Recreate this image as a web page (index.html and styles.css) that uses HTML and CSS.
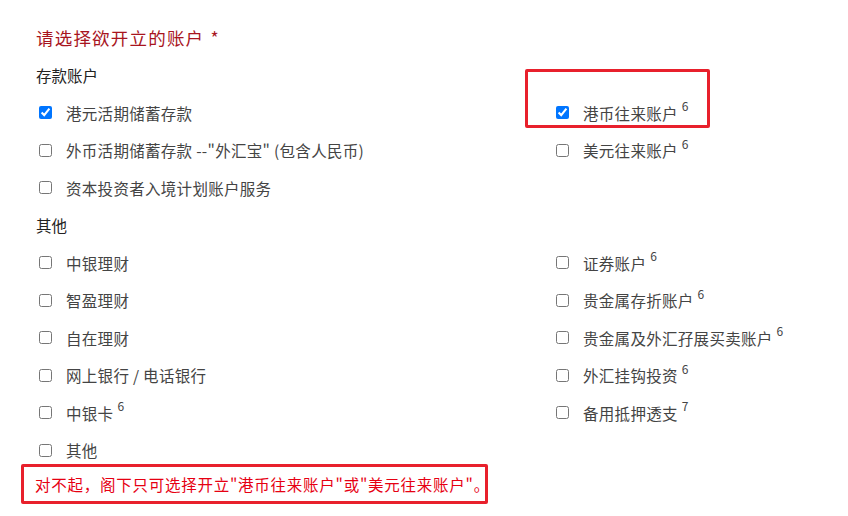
FILE: index.html
```html
<!DOCTYPE html>
<html lang="zh-CN">
<head>
<meta charset="utf-8">
<title>请选择欲开立的账户</title>
<link rel="stylesheet" href="styles.css">
</head>
<body>
<div class="form">
  <div class="title">请选择欲开立的账户 <span class="star">*</span></div>
  <div class="heading">存款账户</div>
  <div class="grid">
    <label class="item"><input type="checkbox" checked><span>港元活期储蓄存款</span></label>
    <label class="item"><input type="checkbox" checked><span>港币往来账户</span><sup>6</sup></label>
    <label class="item"><input type="checkbox"><span>外币活期储蓄存款 --"外汇宝" (包含人民币)</span></label>
    <label class="item"><input type="checkbox"><span>美元往来账户</span><sup>6</sup></label>
    <label class="item"><input type="checkbox"><span>资本投资者入境计划账户服务</span></label>
    <div class="item empty"></div>
  </div>
  <div class="heading">其他</div>
  <div class="grid">
    <label class="item"><input type="checkbox"><span>中银理财</span></label>
    <label class="item"><input type="checkbox"><span>证券账户</span><sup>6</sup></label>
    <label class="item"><input type="checkbox"><span>智盈理财</span></label>
    <label class="item"><input type="checkbox"><span>贵金属存折账户</span><sup>6</sup></label>
    <label class="item"><input type="checkbox"><span>自在理财</span></label>
    <label class="item"><input type="checkbox"><span>贵金属及外汇孖展买卖账户</span><sup>6</sup></label>
    <label class="item"><input type="checkbox"><span>网上银行 / 电话银行</span></label>
    <label class="item"><input type="checkbox"><span>外汇挂钩投资</span><sup>6</sup></label>
    <label class="item"><input type="checkbox"><span>中银卡</span><sup>6</sup></label>
    <label class="item"><input type="checkbox"><span>备用抵押透支</span><sup>7</sup></label>
    <label class="item"><input type="checkbox"><span>其他</span></label>
    <div class="item empty"></div>
  </div>
  <div class="error">对不起，阁下只可选择开立"港币往来账户"或"美元往来账户"。</div>
  <div class="highlight"></div>
</div>
</body>
</html>
```
FILE: styles.css
```css
html, body {
  margin: 0;
  padding: 0;
  background: #ffffff;
}
body {
  font-family: "Microsoft YaHei", "Noto Sans CJK SC", "Noto Sans", sans-serif;
  color: #333333;
}
.form {
  position: relative;
  padding: 19px 0 0 36px;
  width: 812px;
}
.title {
  height: 37.5px;
  line-height: 37.5px;
  font-size: 17.5px;
  color: #a8141e;
  letter-spacing: 1.2px;
}
.star {
  margin-left: 1px;
}
.heading {
  height: 37.5px;
  line-height: 37.5px;
  font-size: 15.5px;
  color: #222222;
}
.grid {
  display: grid;
  grid-template-columns: 517px 1fr;
  padding-left: 3px;
}
.item {
  height: 37.5px;
  display: flex;
  align-items: center;
  font-size: 15.5px;
  color: #444444;
  letter-spacing: 0.3px;
}
.item input {
  margin: 0 14px 0 0;
  width: 13px;
  height: 13px;
  flex: none;
}
.item sup {
  font-size: 12px;
  margin-left: 4px;
  position: relative;
  top: -7px;
  vertical-align: baseline;
}
.error {
  margin: -5px 0 0 -15px;
  width: 450px;
  height: 34px;
  border: 3px solid #e8202c;
  border-radius: 2px;
  padding-left: 11px;
  line-height: 34px;
  font-size: 15.5px;
  color: #e60012;
  letter-spacing: 0.75px;
  white-space: nowrap;
}
.highlight {
  position: absolute;
  left: 525px;
  top: 69px;
  width: 179px;
  height: 53px;
  border: 3px solid #e8202c;
  border-radius: 2px;
}
```
